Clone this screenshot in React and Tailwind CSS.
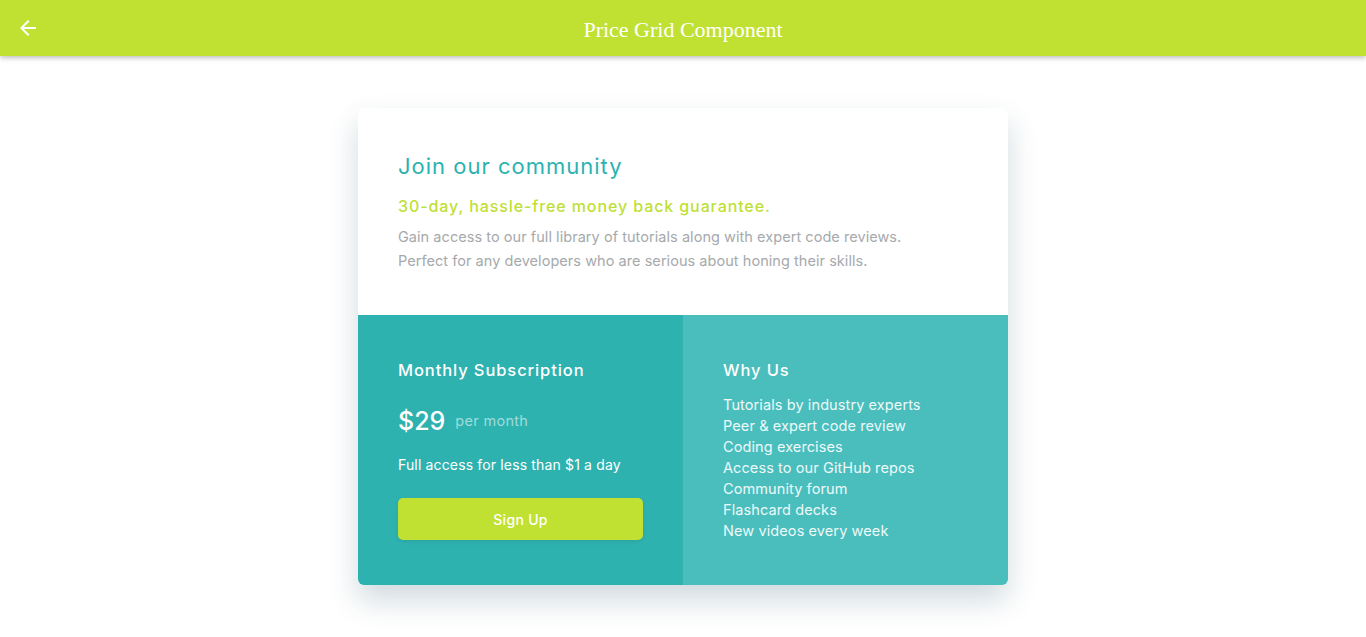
import { MdArrowBack } from "react-icons/md";

const features = [
  "Tutorials by industry experts",
  "Peer & expert code review",
  "Coding exercises",
  "Access to our GitHub repos",
  "Community forum",
  "Flashcard decks",
  "New videos every week",
];

const App = () => {
  return (
    <div className="min-h-screen bg-white font-['Inter',sans-serif]">
      <header className="h-14 bg-[#c0e132] grid grid-cols-[56px_1fr_56px] items-center shadow-[0_2px_5px_rgba(0,0,0,0.25)] relative z-10">
        <div className="pl-4 text-white">
          <MdArrowBack size={24} />
        </div>
        <h1 className="pt-[3px] text-center text-white text-[22px] font-['Liberation_Serif',serif]">
          Price Grid Component
        </h1>
        <div />
      </header>

      <main className="flex justify-center pt-[52px] pb-10">
        <div className="w-[650px] rounded-md overflow-hidden bg-white shadow-[0_15px_30px_rgba(20,70,90,0.2)]">
          <section className="px-10 pt-[44px] pb-[42px]">
            <h2 className="text-[#2bb3b1] text-[22px] leading-7 tracking-[1px]">
              Join our community
            </h2>
            <p className="mt-[14px] text-[#c0df34] text-[16px] leading-6 font-medium tracking-[0.9px]">
              30-day, hassle-free money back guarantee.
            </p>
            <p className="mt-[7px] text-[#a6a9ac] text-[14.5px] leading-6 tracking-[0.05px]">
              Gain access to our full library of tutorials along with expert code reviews.
              <br />
              Perfect for any developers who are serious about honing their skills.
            </p>
          </section>

          <div className="grid grid-cols-2">
            <section className="bg-[#2eb2b0] px-10 pt-[43px] pb-[45px] text-white">
              <h3 className="text-[16.5px] leading-6 font-medium tracking-[0.9px]">Monthly Subscription</h3>
              <div className="mt-[23px] flex items-center gap-[10px] h-8">
                <span className="text-[25px] leading-8 font-medium">$29</span>
                <span className="text-[14.5px] text-[#9fdcdb] tracking-[0.3px]">per month</span>
              </div>
              <p className="mt-[18px] text-[14px] leading-5 tracking-[0.15px]">
                Full access for less than $1 a day
              </p>
              <button className="mt-[23px] w-[245px] h-[42px] rounded-[5px] bg-[#c0e132] text-white text-[14px] font-medium tracking-[0.3px] shadow-[0_2px_4px_rgba(0,0,0,0.08)]">
                Sign Up
              </button>
            </section>

            <section className="bg-[#4abebd] px-10 pt-[43px] text-white">
              <h3 className="text-[16.5px] leading-6 font-medium tracking-[0.9px]">Why Us</h3>
              <ul className="mt-3 text-[14.5px] leading-[21px] tracking-[0.1px] text-[#eef9f9]">
                {features.map((f) => (
                  <li key={f}>{f}</li>
                ))}
              </ul>
            </section>
          </div>
        </div>
      </main>
    </div>
  );
};

export default App;
